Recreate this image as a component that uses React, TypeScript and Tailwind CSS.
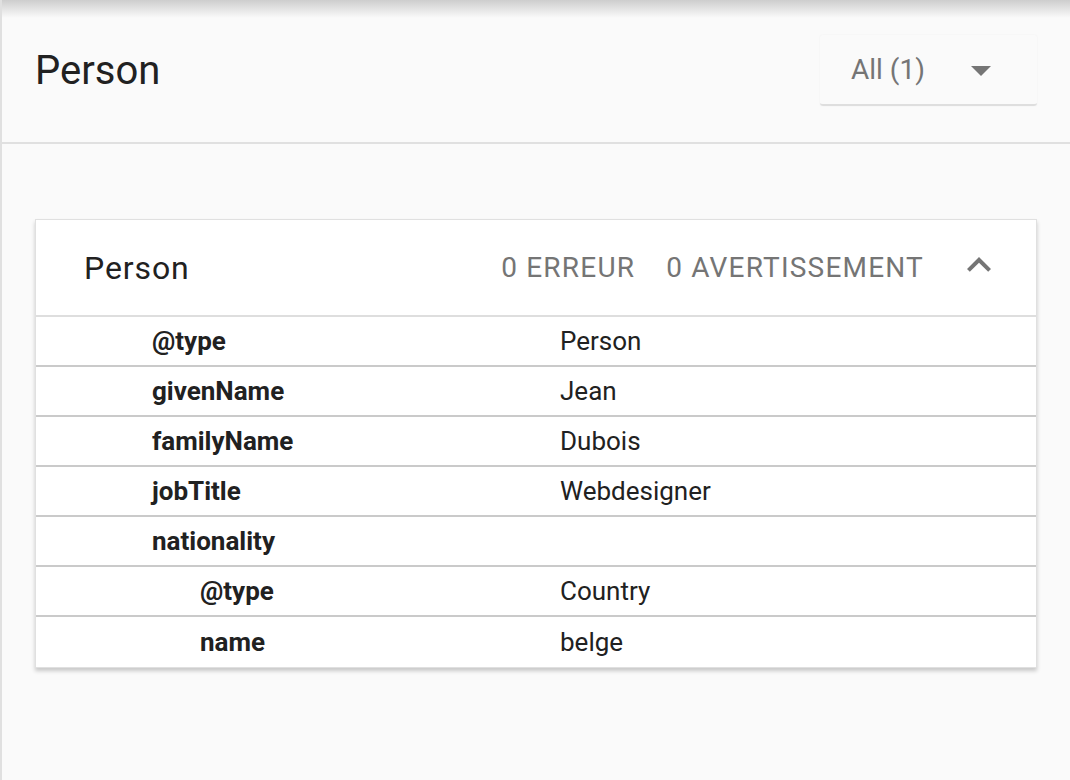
import React from "react";

const rows: { k: string; v: string; nested?: boolean }[] = [
  { k: "@type", v: "Person" },
  { k: "givenName", v: "Jean" },
  { k: "familyName", v: "Dubois" },
  { k: "jobTitle", v: "Webdesigner" },
  { k: "nationality", v: "" },
  { k: "@type", v: "Country", nested: true },
  { k: "name", v: "belge", nested: true },
];

export default function App() {
  return (
    <div className="relative w-[1070px] h-[780px] overflow-hidden bg-[#fafafa] border-l-2 border-[#e0e0e0] font-['Roboto',sans-serif] text-[#212121]">
      <div className="pointer-events-none absolute left-0 right-0 top-0 h-[18px] bg-gradient-to-b from-[#cdcdcd] to-[#fafafa]/0" />
      <header className="h-[144px] border-b-2 border-[#e0e0e0] flex items-center justify-between pl-[33px] pr-[33px]">
        <h1 className="text-[40px] leading-none text-[#212121] font-normal">Person</h1>
        <div className="w-[217px] h-[71px] mt-[-1px] rounded-[3px] border-b-2 border-[#dedede] shadow-[0_0_2px_rgba(0,0,0,0.05)] flex items-center justify-between pl-[31px] pr-[46px]">
          <span className="text-[28px] text-[#757575] leading-none">All (1)</span>
          <svg width="20" height="10" viewBox="0 0 20 10" className="mt-[2px]">
            <polygon points="0,0 20,0 10,10" fill="#757575" />
          </svg>
        </div>
      </header>
      <section className="mt-[75px] ml-[33px] w-[1002px] bg-white border border-[#e0e0e0] shadow-[0_3px_4px_rgba(0,0,0,0.2)]">
        <div className="h-[97px] border-b-2 border-[#dedede] flex items-center pl-[48px] pr-[33px]">
          <span className="text-[32px] tracking-[0.9px] leading-none">Person</span>
          <div className="ml-auto flex items-center text-[28px] tracking-[1.2px] text-[#757575] leading-none">
            <span>0 ERREUR</span>
            <span className="ml-[31px]">0 AVERTISSEMENT</span>
            <svg width="48" height="48" viewBox="0 0 24 24" className="ml-[31px] mt-[-6px]">
              <path d="M12 8l-6 6 1.41 1.41L12 10.83l4.59 4.58L18 14z" fill="#757575" />
            </svg>
          </div>
        </div>
        {rows.map((r, i) => (
          <div
            key={i}
            className={`h-[50px] flex items-center text-[26px] leading-none ${i < rows.length - 1 ? "border-b-2 border-[#cacaca]" : ""}`}
          >
            <div className={`w-[524px] font-bold ${r.nested ? "pl-[164px]" : "pl-[116px]"}`}>{r.k}</div>
            <div>{r.v}</div>
          </div>
        ))}
      </section>
    </div>
  );
}
